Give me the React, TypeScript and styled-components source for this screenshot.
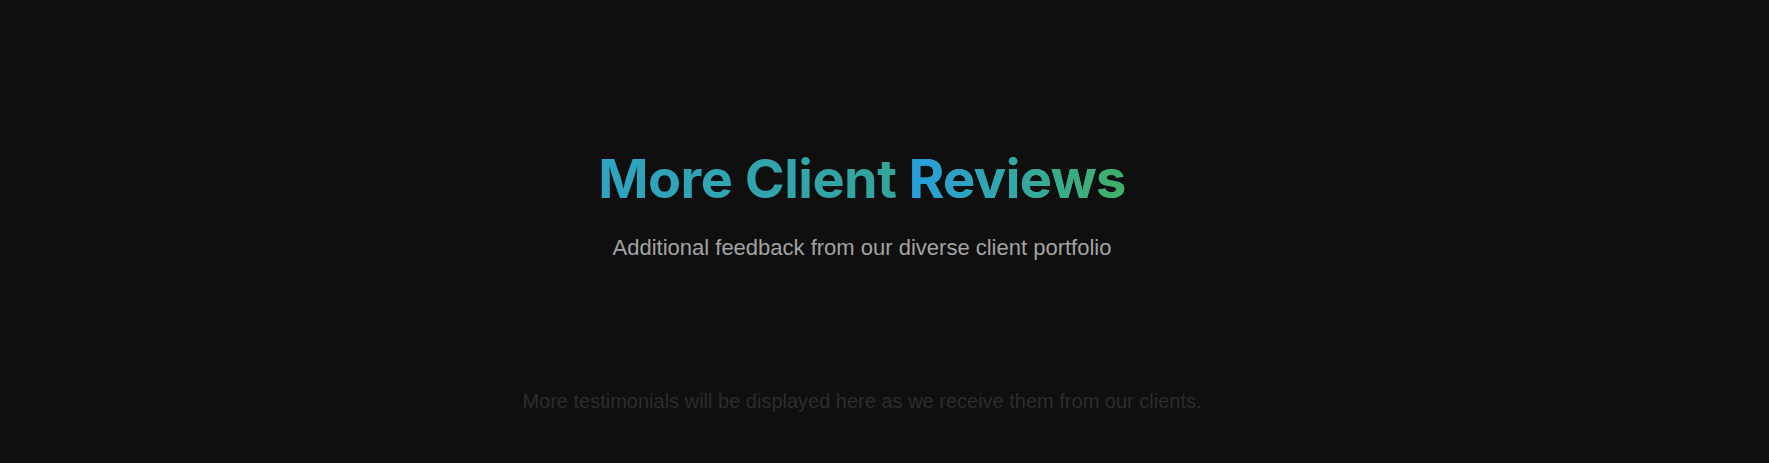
import React from "react";
import styled, { createGlobalStyle } from "styled-components";

const GlobalStyle = createGlobalStyle`
  html, body {
    margin: 0;
    padding: 0;
    background: #0f0f0f;
  }
  body {
    font-family: "Liberation Sans", Arial, sans-serif;
  }
`;

const Section = styled.section`
  min-height: 463px;
  box-sizing: border-box;
  padding: 146px 45px 0 0;
  display: flex;
  flex-direction: column;
  align-items: center;
  background: #0f0f0f;
`;

const Header = styled.header`
  display: flex;
  flex-direction: column;
  align-items: center;
  gap: 23px;
`;

const Title = styled.h2`
  margin: 0;
  display: inline-block;
  font-family: Inter, "Noto Sans", sans-serif;
  font-weight: 700;
  font-size: 54px;
  line-height: 65px;
  letter-spacing: -0.5px;
  background: linear-gradient(90deg, #2ea4c2 0%, #37a67f 100%);
  -webkit-background-clip: text;
  background-clip: text;
  color: transparent;
`;

const Accent = styled.span`
  display: inline-block;
  background: linear-gradient(90deg, #279ee0 0%, #40b165 100%);
  -webkit-background-clip: text;
  background-clip: text;
  color: transparent;
`;

const Subtitle = styled.p`
  margin: 0;
  font-size: 22px;
  line-height: 28px;
  color: #a3a3a3;
`;

const Placeholder = styled.p`
  margin: 125px 0 0;
  font-size: 20px;
  line-height: 28px;
  color: #2b2d30;
`;

export default function App() {
  return (
    <>
      <GlobalStyle />
      <Section>
        <Header>
          <Title>
            More Client <Accent>Reviews</Accent>
          </Title>
          <Subtitle>Additional feedback from our diverse client portfolio</Subtitle>
        </Header>
        <Placeholder>
          More testimonials will be displayed here as we receive them from our clients.
        </Placeholder>
      </Section>
    </>
  );
}
